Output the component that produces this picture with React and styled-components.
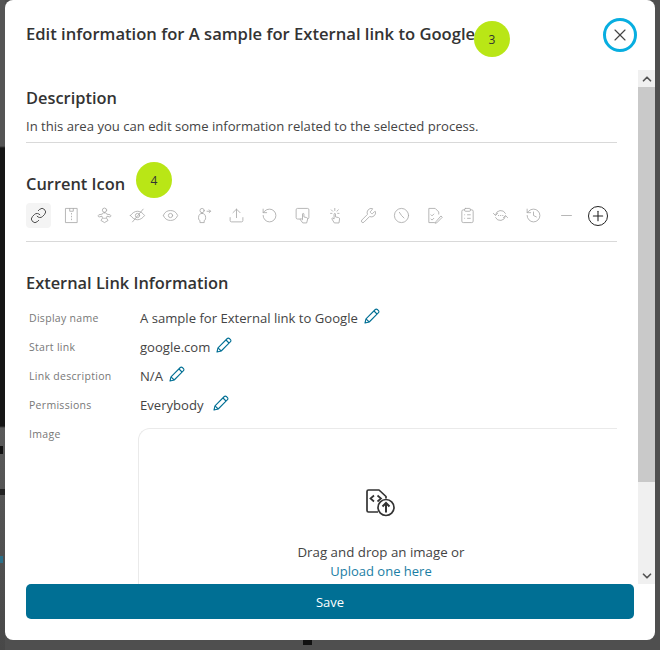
import React from "react";
import styled, { createGlobalStyle } from "styled-components";
import { ChevronUp, ChevronDown, X, Plus, Minus, Eye, Upload, RotateCcw, Wrench, ClipboardList, History, Link } from "lucide-react";

const GlobalStyle = createGlobalStyle`
  html, body {
    margin: 0;
    padding: 0;
    height: 100%;
    overflow: hidden;
  }
  body {
    font-family: "Open Sans", "Noto Sans", "Liberation Sans", sans-serif;
    color: #333;
  }
`;

const Glyph = ({ children, ...props }) => (
  <svg viewBox="0 0 24 24" fill="none" stroke="currentColor" strokeWidth="1.2" strokeLinecap="round" strokeLinejoin="round" {...props}>
    {children}
  </svg>
);

const NotePageIcon = (props) => (
  <Glyph {...props}>
    <path d="M4 2h16v20H4z" />
    <path d="M9.500 2v4h5V2M12 9v1M12 13v1M12 17v1" />
  </Glyph>
);

const PersonArmsIcon = (props) => (
  <Glyph {...props}>
    <circle cx="12" cy="4.500" r="3" />
    <path d="M12 8c-2 0-3 1-3 2l-5 1c-1.500 1-1 3 .5 3l4-1c0 2 1 3 3.500 3s3.500-1 3.500-3l4 1c1.500 0 2-2 .5-3l-5-1c0-1-1-2-3-2zM9 16l-2 3 5 3 5-3-2-3" />
  </Glyph>
);

const EyeSlashIcon = (props) => (
  <Glyph {...props}>
    <path d="M2 12c3-4 6.500-6 10-6s7 2 10 6c-3 4-6.500 6-10 6s-7-2-10-6z" />
    <circle cx="12" cy="12" r="3" />
    <path d="M20 3L5 21" />
  </Glyph>
);

const PersonNextIcon = (props) => (
  <Glyph {...props}>
    <circle cx="10" cy="5" r="3" />
    <path d="M10 9c-3 0-5 2-5 6 0 3 1 4 2 4v3h6v-3c1 0 2-1 2-4 0-4-2-6-5-6zM17 6h5M20 4l2 2-2 2" />
  </Glyph>
);

const TouchScreenIcon = (props) => (
  <Glyph {...props}>
    <path d="M9 17H5a2 2 0 0 1-2-2V4a2 2 0 0 1 2-2h14a2 2 0 0 1 2 2v11a2 2 0 0 1-1 1.700" />
    <path d="M12 22l-3-4c-.6-1 .7-2 1.500-1.200L12 18v-8c0-1.300 2-1.300 2 0v4l4 1c1 .3 1.500 1 1.300 2L18 22z" />
  </Glyph>
);

const TapIcon = (props) => (
  <Glyph {...props}>
    <path d="M10 22l-3-5c-.6-1 .7-2 1.500-1.200L10 17v-7c0-1.300 2-1.300 2 0v4l4.500 1c1 .3 1.500 1 1.300 2L17 22z" />
    <path d="M11 2v3M6 4l2 2M16 4l-2 2M5 9h2M15 9h2" />
  </Glyph>
);

const ClockHandIcon = (props) => (
  <Glyph {...props}>
    <circle cx="12" cy="12" r="10" />
    <path d="M9 7.500l3 4.500 3.500 3.500" />
  </Glyph>
);

const ChecklistEditIcon = (props) => (
  <Glyph {...props}>
    <path d="M12 22H4V2h9l5 5v3" />
    <path d="M7 11l1.500 1.500L11 10M7 17l1.500 1.500L11 16" />
    <path d="M14 21l-1 2 2-.5 8-8-1.500-1.500z" />
  </Glyph>
);

const SyncDotsIcon = (props) => (
  <Glyph {...props}>
    <path d="M5 11a7.500 7.500 0 0 1 14-2M19 13a7.500 7.500 0 0 1-14 2" />
    <path d="M2 9l3 3 3-3M16 15l3-3 3 3" />
    <path d="M9 12h.5M12 12h.5M15 12h.5" />
  </Glyph>
);

const PencilGlyph = () => (
  <svg width="16" height="16" viewBox="0 0 16 16" fill="none" stroke="#006f94" strokeWidth="1.1" strokeLinejoin="round">
    <path d="M1 15l1-4.200L11.300 1.500a1.400 1.400 0 0 1 2 0l1.200 1.200a1.400 1.400 0 0 1 0 2L5.200 14z" />
    <path d="M10 3l3 3M2 10.800L5.200 14" />
  </svg>
);

const FileCodeUpload = () => (
  <svg width="32" height="30" viewBox="0 0 32 30" fill="none" stroke="#333" strokeWidth="1.700">
    <path d="M13 24H3.500A1.500 1.500 0 0 1 2 22.500V3.500A1.500 1.500 0 0 1 3.500 2H14l7 6.500v2" strokeLinejoin="round" />
    <path d="M9 7.500L5.500 10.500L9 13.500M12.500 7.500L16 10.500L12.500 13.500" />
    <circle cx="21" cy="19.500" r="8" />
    <path d="M21 24.500v-9.500M17.500 18.500l3.500-3.500 3.500 3.500" strokeWidth="2" />
  </svg>
);

const ICONS = [
  { Icon: Link, active: true },
  { Icon: NotePageIcon },
  { Icon: PersonArmsIcon },
  { Icon: EyeSlashIcon },
  { Icon: Eye },
  { Icon: PersonNextIcon },
  { Icon: Upload },
  { Icon: RotateCcw },
  { Icon: TouchScreenIcon },
  { Icon: TapIcon },
  { Icon: Wrench },
  { Icon: ClockHandIcon },
  { Icon: ChecklistEditIcon },
  { Icon: ClipboardList },
  { Icon: SyncDotsIcon },
  { Icon: History },
  { Icon: Minus },
];

const FIELDS = [
  { label: "Display name", value: "A sample for External link to Google", gap: 6 },
  { label: "Start link", value: "google.com", gap: 6 },
  { label: "Link description", value: "N/A", gap: 6 },
  { label: "Permissions", value: "Everybody", gap: 9 },
];

const App = () => {
  return (
    <>
      <GlobalStyle />
      <Backdrop>
        <Sliver $top={446} $left={0} $w={3} $h={8} $color="#111" />
        <Sliver $top={489} $left={0} $w={5} $h={6} $color="#222" />
        <Sliver $top={556} $left={0} $w={3} $h={7} $color="#2b6f88" />
        <Sliver $top={640} $left={303} $w={9} $h={5} $color="#111" />
        <Modal>
          <Header>
            <Title>Edit information for A sample for External link to Google</Title>
            <Badge $top={21} $left={469}>3</Badge>
            <CloseButton>
              <X size={20} strokeWidth={1.4} />
            </CloseButton>
          </Header>

          <Middle>
            <Content>
              <ContentInner>
                <SectionTitle>Description</SectionTitle>
                <Intro>In this area you can edit some information related to the selected process.</Intro>
                <Divider />

                <IconSection>
                  <SectionTitle>Current Icon</SectionTitle>
                  <Badge $top={19} $left={110}>4</Badge>
                  <IconRow>
                    {ICONS.map(({ Icon, active }, i) => (
                      <IconSlot key={i} $active={active}>
                        <Icon width={17} height={17} strokeWidth={1.2} />
                      </IconSlot>
                    ))}
                    <AddIcon>
                      <Plus size={16} strokeWidth={1.6} />
                    </AddIcon>
                  </IconRow>
                </IconSection>
                <Divider />

                <SectionTitle $top={29}>External Link Information</SectionTitle>
                <Fields>
                  {FIELDS.map((field) => (
                    <React.Fragment key={field.label}>
                      <FieldLabel>{field.label}</FieldLabel>
                      <FieldValue>
                        {field.value}
                        <EditIcon $gap={field.gap}>
                          <PencilGlyph />
                        </EditIcon>
                      </FieldValue>
                    </React.Fragment>
                  ))}
                  <FieldLabel>Image</FieldLabel>
                  <DropZone>
                    <FileCodeUpload />
                    <DropText>Drag and drop an image or</DropText>
                    <UploadLink>Upload one here</UploadLink>
                  </DropZone>
                </Fields>
              </ContentInner>
            </Content>
            <ScrollBar>
              <ScrollButton>
                <ChevronUp size={14} strokeWidth={3} />
              </ScrollButton>
              <ScrollThumb />
              <ScrollTrack />
              <ScrollButton>
                <ChevronDown size={14} strokeWidth={3} />
              </ScrollButton>
            </ScrollBar>
          </Middle>

          <Footer>
            <SaveButton>Save</SaveButton>
          </Footer>
        </Modal>
      </Backdrop>
    </>
  );
};

const Backdrop = styled.div`
  position: relative;
  width: 660px;
  height: 650px;
  box-sizing: border-box;
  padding: 0 5px 10px;
  overflow: hidden;
  background:
    linear-gradient(
        to bottom,
        #555 0,
        #555 146px,
        #151515 148px,
        #151515 426px,
        #5a5a5a 428px,
        #484848 100%
      )
      left top / 5px 100% no-repeat,
    #4f4f4f;
`;

const Sliver = styled.div`
  position: absolute;
  top: ${(p) => p.$top}px;
  left: ${(p) => p.$left}px;
  width: ${(p) => p.$w}px;
  height: ${(p) => p.$h}px;
  background: ${(p) => p.$color};
`;

const Modal = styled.div`
  position: relative;
  height: 640px;
  display: flex;
  flex-direction: column;
  background: #fff;
  border-radius: 8px;
  overflow: hidden;
`;

const Header = styled.div`
  position: relative;
  flex: 0 0 70px;
  display: flex;
  align-items: flex-start;
  justify-content: space-between;
  padding: 20px 18px 0 21px;
  box-sizing: border-box;
`;

const Title = styled.h2`
  margin: 0;
  font-size: 16.6px;
  line-height: 28px;
  font-weight: 600;
  color: #333;
  white-space: nowrap;
`;

const Badge = styled.span`
  position: absolute;
  top: ${(p) => p.$top}px;
  left: ${(p) => p.$left}px;
  width: 36px;
  height: 36px;
  border-radius: 50%;
  background: #b9e616;
  color: #333;
  font-size: 12px;
  display: flex;
  align-items: center;
  justify-content: center;
`;

const CloseButton = styled.button`
  width: 34px;
  height: 34px;
  margin-top: -2px;
  padding: 0;
  display: flex;
  align-items: center;
  justify-content: center;
  box-sizing: border-box;
  border: 3px solid #08aee0;
  border-radius: 50%;
  background: #fff;
  color: #444;
`;

const Middle = styled.div`
  flex: 1;
  min-height: 0;
  display: flex;
`;

const Content = styled.div`
  flex: 1;
  min-width: 0;
  padding: 16px 21px 0;
`;

const ContentInner = styled.div`
  height: 100%;
  overflow: hidden;
`;

const SectionTitle = styled.h3`
  margin: ${(p) => p.$top || 0}px 0 0;
  font-size: 16.4px;
  line-height: 24px;
  font-weight: 600;
  color: #333;
`;

const Intro = styled.p`
  margin: 6px 0 0;
  font-size: 13.1px;
  line-height: 20px;
  color: #444;
`;

const Divider = styled.hr`
  margin: 6px 0 0;
  border: 0;
  border-top: 1px solid #d9d9d9;
`;

const IconSection = styled.div`
  position: relative;
  padding: 29px 0 7px;
`;

const IconRow = styled.div`
  display: flex;
  align-items: center;
  margin-top: 7px;
`;

const IconSlot = styled.div`
  flex: 0 0 25px;
  height: 25px;
  margin-right: 8px;
  display: flex;
  align-items: center;
  justify-content: center;
  border-radius: 4px;
  background: ${(p) => (p.$active ? "#f4f4f4" : "transparent")};
  color: ${(p) => (p.$active ? "#333" : "#aaa")};
`;

const AddIcon = styled.div`
  width: 20px;
  height: 20px;
  margin-left: 1px;
  box-sizing: border-box;
  display: flex;
  align-items: center;
  justify-content: center;
  border: 1.5px solid #222;
  border-radius: 50%;
  color: #222;
`;

const Fields = styled.div`
  display: grid;
  grid-template-columns: 114px 1fr;
  grid-auto-rows: 29px;
  margin-top: 10px;
`;

const FieldLabel = styled.div`
  padding-left: 3px;
  font-size: 10.5px;
  line-height: 26px;
  letter-spacing: 0.3px;
  color: #777;
`;

const FieldValue = styled.div`
  display: flex;
  align-items: flex-start;
  font-size: 13.1px;
  line-height: 27px;
  color: #444;
`;

const EditIcon = styled.span`
  display: flex;
  margin: 3px 0 0 ${(p) => p.$gap}px;
`;

const DropZone = styled.div`
  grid-row: span 8;
  margin: 7px -6px 0 -2px;
  height: 260px;
  box-sizing: border-box;
  display: flex;
  flex-direction: column;
  align-items: center;
  padding-top: 59px;
  border: 1px solid #eaeaea;
  border-right: 0;
  border-radius: 12px 0 0 12px;
`;

const DropText = styled.div`
  margin-top: 25px;
  font-size: 13.3px;
  line-height: 19px;
  color: #444;
`;

const UploadLink = styled.a`
  font-size: 13px;
  line-height: 19px;
  color: #1a7ea4;
`;

const ScrollBar = styled.div`
  flex: 0 0 17px;
  display: flex;
  flex-direction: column;
  background: #f0f0f0;
`;

const ScrollButton = styled.div`
  flex: 0 0 17px;
  display: flex;
  align-items: center;
  justify-content: center;
  color: #555;
`;

const ScrollThumb = styled.div`
  flex: 0 0 395px;
  background: #c9c9c9;
`;

const ScrollTrack = styled.div`
  flex: 1;
`;

const Footer = styled.div`
  flex: 0 0 56px;
  padding: 0 21px;
`;

const SaveButton = styled.button`
  display: block;
  width: 100%;
  height: 35px;
  border: 0;
  border-radius: 5px;
  background: #006f94;
  color: #fff;
  font-family: inherit;
  font-size: 13px;
`;

export default App;
